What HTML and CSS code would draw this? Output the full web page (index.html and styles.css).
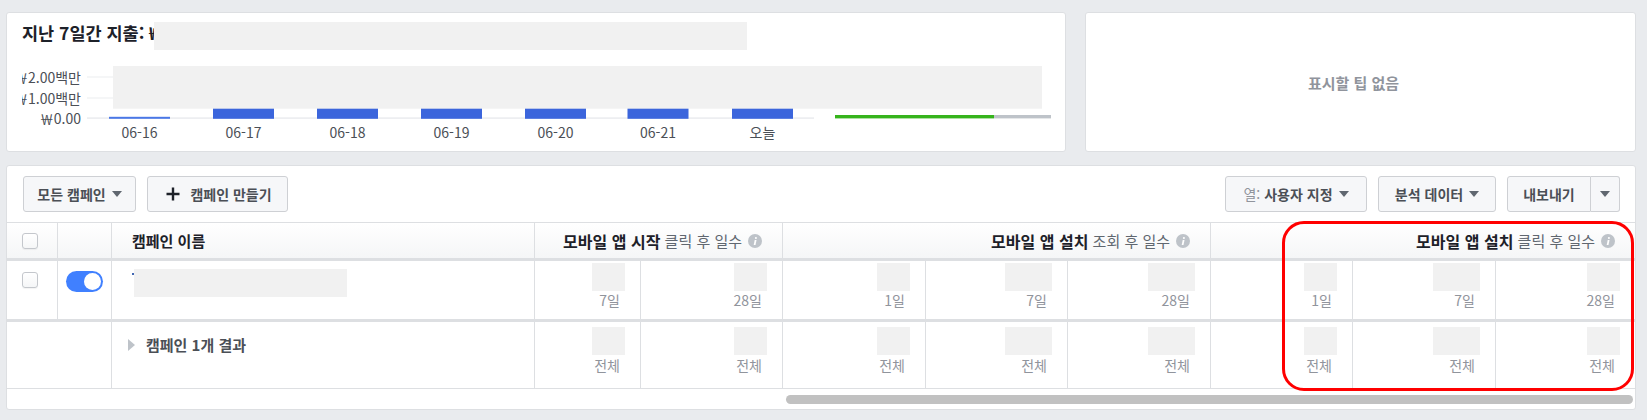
FILE: index.html
```html
<!DOCTYPE html>
<html lang="ko">
<head>
<meta charset="utf-8">
<title>캠페인</title>
<link rel="stylesheet" href="styles.css">
</head>
<body>
<div class="page">
  <div class="top-row">
    <section class="card spend">
      <div class="spend-title">
        <h1>지난 7일간 지출: ₩</h1>
        <span class="redact redact-title"></span>
      </div>
      <svg class="chart" width="1058" height="100" viewBox="0 0 1058 100">
        <defs>
          <clipPath id="axis-clip"><rect x="15" y="0" width="80" height="80"/></clipPath>
        </defs>
        <rect x="80" y="26.5" width="727" height="1" fill="#ebedf0"/>
        <rect x="80" y="47.5" width="727" height="1" fill="#ebedf0"/>
        <rect x="80" y="67.3" width="727" height="1.6" fill="#ebedf0"/>
        <g clip-path="url(#axis-clip)">
          <text class="ylab" x="74" y="27">￦2.00백만</text>
          <text class="ylab" x="74" y="48">￦1.00백만</text>
          <text class="ylab" x="74" y="68">￦0.00</text>
        </g>
        <rect x="102" y="66.8" width="61" height="2" fill="#4a78e6"/>
        <rect x="206" y="40" width="61" height="28.8" fill="#3b65dc"/>
        <rect x="310" y="40" width="61" height="28.8" fill="#3b65dc"/>
        <rect x="414" y="40" width="61" height="28.8" fill="#3b65dc"/>
        <rect x="518" y="40" width="61" height="28.8" fill="#3b65dc"/>
        <rect x="620.5" y="40" width="61" height="28.8" fill="#3b65dc"/>
        <rect x="725" y="40" width="61" height="28.8" fill="#3b65dc"/>
        <text class="xlab" x="132.5" y="82">06-16</text>
        <text class="xlab" x="236.5" y="82">06-17</text>
        <text class="xlab" x="340.5" y="82">06-18</text>
        <text class="xlab" x="444.5" y="82">06-19</text>
        <text class="xlab" x="548.5" y="82">06-20</text>
        <text class="xlab" x="651" y="82">06-21</text>
        <text class="xlab" x="755.5" y="82">오늘</text>
        <rect x="106" y="16" width="929" height="42.7" fill="#f1f1f1"/>
        <rect x="828" y="65" width="159" height="3.4" fill="#36b41c"/>
        <rect x="987" y="65" width="57" height="3.4" fill="#bec3c9"/>
      </svg>
    </section>
    <section class="card tips">
      <p>표시할 팁 없음</p>
    </section>
  </div>

  <section class="card campaigns">
    <div class="toolbar">
      <div class="tb-group">
        <button class="btn btn-all">모든 캠페인 <svg class="caret" viewBox="0 0 10 6" width="10" height="6"><path d="M0 0h10L5 6z"/></svg></button>
        <button class="btn btn-create"><svg class="plus" viewBox="0 0 14 14" width="14" height="14"><path d="M7 0.5v13M0.5 7h13"/></svg>캠페인 만들기</button>
      </div>
      <div class="tb-group">
        <button class="btn btn-cols"><span class="muted">열:</span>&nbsp;사용자 지정 <svg class="caret" viewBox="0 0 10 6" width="10" height="6"><path d="M0 0h10L5 6z"/></svg></button>
        <button class="btn btn-data">분석 데이터 <svg class="caret" viewBox="0 0 10 6" width="10" height="6"><path d="M0 0h10L5 6z"/></svg></button>
        <div class="split">
          <button class="btn split-main">내보내기</button>
          <button class="btn split-caret"><svg class="caret" viewBox="0 0 10 6" width="10" height="6"><path d="M0 0h10L5 6z"/></svg></button>
        </div>
      </div>
    </div>

    <div class="table">
      <!-- header -->
      <div class="cell hc c-check"><span class="chk"></span></div>
      <div class="cell hc"></div>
      <div class="cell hc c-name">캠페인 이름</div>
      <div class="cell hc hgroup span2"><b>모바일 앱 시작</b>&nbsp;클릭 후 일수<svg class="info" viewBox="0 0 14 14" width="14" height="14"><circle cx="7" cy="7" r="7"/><circle class="i" cx="7.9" cy="4" r="1.05"/><path class="i" d="M6.7 6.1h1.8l-1 5H5.7z"/></svg></div>
      <div class="cell hc hgroup span3"><b>모바일 앱 설치</b>&nbsp;조회 후 일수<svg class="info" viewBox="0 0 14 14" width="14" height="14"><circle cx="7" cy="7" r="7"/><circle class="i" cx="7.9" cy="4" r="1.05"/><path class="i" d="M6.7 6.1h1.8l-1 5H5.7z"/></svg></div>
      <div class="cell hc hgroup span3 last"><b>모바일 앱 설치</b>&nbsp;클릭 후 일수<svg class="info" viewBox="0 0 14 14" width="14" height="14"><circle cx="7" cy="7" r="7"/><circle class="i" cx="7.9" cy="4" r="1.05"/><path class="i" d="M6.7 6.1h1.8l-1 5H5.7z"/></svg></div>

      <!-- row 1 -->
      <div class="cell r1 c-check1"><span class="chk"></span></div>
      <div class="cell r1 c-toggle"><span class="toggle"><span class="knob"></span></span></div>
      <div class="cell r1 c-name1"><span class="link-bit"></span><span class="redact redact-name"></span></div>
      <div class="cell r1 vc"><span class="ph"></span><span class="lbl">7일</span></div>
      <div class="cell r1 vc"><span class="ph"></span><span class="lbl">28일</span></div>
      <div class="cell r1 vc"><span class="ph"></span><span class="lbl">1일</span></div>
      <div class="cell r1 vc"><span class="ph wide"></span><span class="lbl">7일</span></div>
      <div class="cell r1 vc"><span class="ph wide"></span><span class="lbl">28일</span></div>
      <div class="cell r1 vc"><span class="ph"></span><span class="lbl">1일</span></div>
      <div class="cell r1 vc"><span class="ph wide"></span><span class="lbl">7일</span></div>
      <div class="cell r1 vc last"><span class="ph"></span><span class="lbl">28일</span></div>

      <!-- row 2 -->
      <div class="cell r2 span2"></div>
      <div class="cell r2 c-name2"><svg class="tri" viewBox="0 0 7 12" width="7" height="12"><path d="M0 0l7 6-7 6z"/></svg><span>캠페인 1개 결과</span></div>
      <div class="cell r2 vc"><span class="ph"></span><span class="lbl">전체</span></div>
      <div class="cell r2 vc"><span class="ph"></span><span class="lbl">전체</span></div>
      <div class="cell r2 vc"><span class="ph"></span><span class="lbl">전체</span></div>
      <div class="cell r2 vc"><span class="ph wide"></span><span class="lbl">전체</span></div>
      <div class="cell r2 vc"><span class="ph wide"></span><span class="lbl">전체</span></div>
      <div class="cell r2 vc"><span class="ph"></span><span class="lbl">전체</span></div>
      <div class="cell r2 vc"><span class="ph wide"></span><span class="lbl">전체</span></div>
      <div class="cell r2 vc last"><span class="ph"></span><span class="lbl">전체</span></div>
    </div>

    <div class="hscroll"><div class="thumb"></div></div>

    <div class="highlight"></div>
  </section>
</div>
</body>
</html>
```

FILE: styles.css
```css
* { box-sizing: border-box; }

html, body {
  margin: 0;
  padding: 0;
}

body {
  width: 1647px;
  height: 420px;
  overflow: hidden;
  background: #e9ebee;
  font-family: "Noto Sans CJK KR", "Noto Sans", sans-serif;
  color: #1d2129;
}

.page {
  padding: 12px 11px 0 6px;
}

.top-row {
  display: flex;
  gap: 19px;
  height: 140px;
}

.card {
  background: #fff;
  border: 1px solid #dddfe2;
  border-radius: 3px;
}

/* ---------- spend card ---------- */
.spend {
  flex: 0 0 1060px;
}

.spend-title {
  display: flex;
  align-items: flex-start;
  height: 37px;
  padding: 9px 0 0 15px;
}

.spend-title h1 {
  flex: 0 0 132px;
  min-width: 0;
  margin: 0;
  font-size: 17.5px;
  line-height: 22px;
  font-weight: 700;
  white-space: nowrap;
  color: #1d2129;
}

.redact {
  display: block;
  background: #f1f1f1;
}

.redact-title {
  flex: 0 0 593px;
  height: 28px;
}

.chart {
  display: block;
}

.chart text {
  font-family: "Noto Sans CJK KR", "Noto Sans", sans-serif;
  font-size: 14px;
  fill: #4b4f56;
  dominant-baseline: central;
}

.chart .ylab { text-anchor: end; }
.chart .xlab { text-anchor: middle; }

/* ---------- tips card ---------- */
.tips {
  flex: 1;
  display: flex;
  align-items: center;
  justify-content: center;
}

.tips p {
  margin: 0 14px 0 0;
  font-size: 15px;
  font-weight: 700;
  color: #90949c;
}

/* ---------- campaigns card ---------- */
.campaigns {
  position: relative;
  margin-top: 13px;
  height: 245px;
}

.toolbar {
  display: flex;
  justify-content: space-between;
  align-items: flex-start;
  height: 56px;
  padding: 10px 15px 0 16px;
}

.tb-group {
  display: flex;
  gap: 11px;
}

.btn {
  display: flex;
  align-items: center;
  justify-content: center;
  height: 36px;
  padding: 0 14px;
  border: 1px solid #ced0d4;
  border-radius: 3px;
  background: #f6f7f9;
  font-family: "Noto Sans CJK KR", "Noto Sans", sans-serif;
  font-size: 14px;
  font-weight: 700;
  color: #4b4f56;
  white-space: nowrap;
}

.btn .caret {
  fill: #606770;
  margin-left: 6px;
}

.btn-all { width: 113px; padding: 0; }
.btn-create { width: 141px; padding: 0 12px 0 15px; }
.btn-cols { width: 142px; padding: 0; }
.btn-data { width: 118px; padding: 0; }

.plus {
  stroke: #1d2129;
  stroke-width: 2.4;
  margin-right: 10px;
}

.muted {
  font-weight: 400;
  color: #90949c;
}

.split {
  display: flex;
}

.split-main {
  width: 84px;
  padding: 0;
  border-radius: 3px 0 0 3px;
}

.split-caret {
  width: 29px;
  padding: 0;
  border-left: 0;
  border-radius: 0 3px 3px 0;
}

.split-caret .caret {
  margin-left: 0;
}

/* ---------- table ---------- */
.table {
  display: grid;
  grid-template-columns: 51px 54px 423px 106px 142px 143px 142px 143px 142px 143px 139px;
  grid-template-rows: 38px 61px 67px;
  border-top: 1px solid #dddfe2;
}

.cell {
  border-right: 1px solid #dddfe2;
  border-bottom: 1px solid #dddfe2;
  min-width: 0;
}

.cell.last { border-right: 0; }
.span2 { grid-column: span 2; }
.span3 { grid-column: span 3; }

.hc {
  display: flex;
  align-items: center;
  background: linear-gradient(#ffffff, #f5f6f7);
  border-bottom: 3px solid #dddfe2;
}

.c-check {
  padding-left: 15px;
}

.chk {
  display: block;
  width: 16px;
  height: 16px;
  border: 1px solid #c4c7cc;
  border-radius: 3px;
  background: linear-gradient(#ffffff, #f5f6f7);
  box-shadow: 0 1px 1px rgba(0, 0, 0, 0.05);
}

.c-name {
  padding-left: 20px;
  font-size: 15px;
  font-weight: 700;
  color: #1d2129;
}

.hgroup {
  justify-content: flex-end;
  padding-right: 20px;
  font-size: 15px;
  color: #606770;
  white-space: nowrap;
}

.hgroup b {
  font-size: 16px;
  color: #1d2129;
  font-weight: 700;
}

.info {
  margin-left: 6px;
  fill: #bec3c9;
}

.info .i { fill: #fff; }

.r1 {
  border-bottom: 3px solid #dddfe2;
}

.c-check1 {
  padding: 11px 0 0 15px;
}

.c-toggle {
  padding: 10px 0 0 8px;
}

.toggle {
  display: flex;
  justify-content: flex-end;
  align-items: center;
  width: 37px;
  height: 21px;
  padding: 2px;
  border-radius: 11px;
  background: #4080ff;
}

.knob {
  width: 17px;
  height: 17px;
  border-radius: 50%;
  background: #fff;
}

.c-name1 {
  display: flex;
  align-items: flex-start;
  padding: 8px 0 0 20px;
}

.link-bit {
  width: 2px;
  height: 2px;
  margin-top: 4px;
  background: #4267b2;
}

.redact-name {
  width: 213px;
  height: 28px;
}

.vc {
  display: flex;
  flex-direction: column;
  align-items: flex-end;
  padding: 2px 15px 0 0;
}

.r2.vc {
  padding-top: 5px;
}

.ph {
  display: block;
  width: 33px;
  height: 28px;
  background: #f1f1f1;
}

.ph.wide { width: 47px; }

.lbl {
  padding-right: 5px;
  font-size: 14px;
  line-height: 18px;
  color: #90949c;
}

.r2 .lbl { margin-top: 1px; }

.c-name2 {
  display: flex;
  align-items: flex-start;
  gap: 11px;
  padding: 12px 0 0 16px;
  font-size: 15px;
  line-height: 22px;
  font-weight: 700;
  color: #4b4f56;
}

.c-name2 span {
  display: block;
}

.tri {
  flex: none;
  margin-top: 5px;
  fill: #bec3c9;
}

/* ---------- scroll ---------- */
.hscroll {
  height: 20px;
  padding: 6px 2px 0 779px;
}

.thumb {
  height: 9px;
  border-radius: 5px;
  background: #c1c1c1;
}

/* ---------- annotation ---------- */
.highlight {
  position: absolute;
  left: 1275px;
  top: 55px;
  width: 352px;
  height: 170px;
  border: 3px solid #f00;
  border-radius: 22px;
  pointer-events: none;
}
```
